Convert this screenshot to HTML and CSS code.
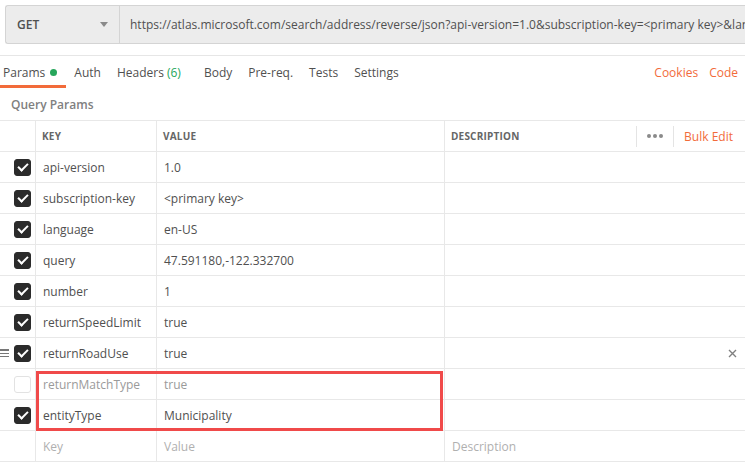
FILE: index.html
```html
<!DOCTYPE html>
<html>
<head>
<meta charset="utf-8">
<link rel="stylesheet" href="styles.css">
</head>
<body>
<div class="page">
  <div class="topbar">
    <div class="method"><span>GET</span><span class="caret"></span></div>
    <div class="url">https://atlas.microsoft.com/search/address/reverse/json?api-version=1.0&amp;subscription-key=&lt;primary key&gt;&amp;lan</div>
  </div>
  <div class="tabbar">
    <div class="tabs">
      <span class="tab active">Params<span class="dot"></span></span>
      <span class="tab">Auth</span>
      <span class="tab">Headers <span class="count">(6)</span></span>
      <span class="tab body-tab">Body</span>
      <span class="tab">Pre-req.</span>
      <span class="tab">Tests</span>
      <span class="tab">Settings</span>
    </div>
    <div class="links"><span>Cookies</span><span>Code</span></div>
  </div>
  <div class="section-title">Query Params</div>
  <div class="table">
    <div class="row head">
      <div class="c chk"></div>
      <div class="c">KEY</div>
      <div class="c">VALUE</div>
      <div class="c desc-head"><span>DESCRIPTION</span><span class="tools"><span class="sep"></span><span class="more"><i></i><i></i><i></i></span><span class="sep"></span><span class="bulk">Bulk Edit</span></span></div>
    </div>
    <div class="row"><div class="c chk"><span class="box on"></span></div><div class="c">api-version</div><div class="c">1.0</div><div class="c"></div></div>
    <div class="row"><div class="c chk"><span class="box on"></span></div><div class="c">subscription-key</div><div class="c">&lt;primary key&gt;</div><div class="c"></div></div>
    <div class="row"><div class="c chk"><span class="box on"></span></div><div class="c">language</div><div class="c">en-US</div><div class="c"></div></div>
    <div class="row"><div class="c chk"><span class="box on"></span></div><div class="c">query</div><div class="c">47.591180,-122.332700</div><div class="c"></div></div>
    <div class="row"><div class="c chk"><span class="box on"></span></div><div class="c">number</div><div class="c">1</div><div class="c"></div></div>
    <div class="row"><div class="c chk"><span class="box on"></span></div><div class="c">returnSpeedLimit</div><div class="c">true</div><div class="c"></div></div>
    <div class="row"><div class="c chk"><span class="handle"></span><span class="box on"></span></div><div class="c">returnRoadUse</div><div class="c">true</div><div class="c del-cell"><svg class="del" width="9" height="9" viewBox="0 0 9 9"><path d="M1 1L8 8M8 1L1 8" stroke="#808080" stroke-width="1.4" fill="none"/></svg></div></div>
    <div class="highlight-wrap">
      <div class="row off"><div class="c chk"><span class="box"></span></div><div class="c">returnMatchType</div><div class="c">true</div><div class="c"></div></div>
      <div class="row"><div class="c chk"><span class="box on"></span></div><div class="c">entityType</div><div class="c">Municipality</div><div class="c"></div></div>
      <div class="highlight"></div>
    </div>
    <div class="row ph"><div class="c chk"></div><div class="c">Key</div><div class="c">Value</div><div class="c">Description</div></div>
  </div>
</div>
</body>
</html>
```
FILE: styles.css
```css
html, body {
  margin: 0;
  padding: 0;
  background: #fff;
  overflow: hidden;
}
body {
  font-family: "Open Sans", "Liberation Sans", sans-serif;
  font-size: 12px;
  color: #505050;
}
.page {
  width: 745px;
  height: 467px;
  overflow: hidden;
}
.topbar {
  display: flex;
  margin: 5px 0 0 5px;
  height: 37px;
  border: 1px solid #d4d4d4;
  border-right: none;
  border-radius: 3px 0 0 3px;
  background: #ececec;
}
.method {
  width: 114px;
  flex: none;
  display: flex;
  align-items: center;
  justify-content: space-between;
  padding: 0 11px 0 11px;
  box-sizing: border-box;
  border-right: 1px solid #d4d4d4;
  font-weight: 600;
  color: #505050;
}
.caret {
  width: 0;
  height: 0;
  border-left: 4px solid transparent;
  border-right: 4px solid transparent;
  border-top: 5px solid #8a8a8a;
}
.url {
  flex: 1;
  padding-left: 10px;
  line-height: 37px;
  white-space: nowrap;
  overflow: hidden;
  color: #505050;
}
.tabbar {
  margin-top: 11px;
  border-top: 1px solid #e6e6e6;
  height: 32px;
  display: flex;
  align-items: stretch;
  justify-content: space-between;
}
.tabs {
  display: flex;
  margin-left: -5px;
}
.tab {
  position: relative;
  display: flex;
  align-items: center;
  padding: 0 8px;
  white-space: pre;
  color: #505050;
}
.tab.active {
  padding-right: 9px;
}
.tab.active::after {
  content: "";
  position: absolute;
  left: 0;
  right: 0;
  bottom: 0;
  height: 3px;
  background: #f26b3a;
}
.dot {
  display: inline-block;
  width: 7px;
  height: 7px;
  border-radius: 50%;
  background: #26a65b;
  margin-left: 5px;
}
.count {
  color: #26a65b;
}
.body-tab {
  margin-left: 7px;
}
.links {
  display: flex;
  align-items: center;
  gap: 11px;
  padding-right: 7px;
  color: #f26b3a;
}
.section-title {
  padding: 9px 0 0 11px;
  height: 32px;
  box-sizing: border-box;
  font-size: 12px;
  font-weight: 600;
  color: #808080;
  line-height: 16px;
}
.table {
  border-top: 1px solid #e8e8e8;
}
.row {
  display: grid;
  grid-template-columns: 35px 121px 288px 1fr;
  height: 31px;
  box-sizing: border-box;
  border-bottom: 1px solid #e8e8e8;
}
.c {
  display: flex;
  align-items: center;
  padding-left: 7px;
  border-left: 1px solid #e8e8e8;
  white-space: nowrap;
  overflow: hidden;
}
.c.chk {
  border-left: none;
  padding: 0 4px 0 0;
  justify-content: flex-end;
  position: relative;
}
.head .c {
  font-size: 10px;
  font-weight: 700;
  color: #666;
  padding-left: 6px;
  letter-spacing: 0.2px;
}
.desc-head {
  justify-content: space-between;
}
.tools {
  display: flex;
  align-items: center;
  height: 100%;
}
.sep {
  width: 1px;
  height: 21px;
  background: #e4e4e4;
}
.more {
  display: flex;
  gap: 2px;
  padding: 0 10px 0 10px;
}
.more i {
  display: block;
  width: 4px;
  height: 4px;
  border-radius: 50%;
  background: #8a8a8a;
}
.head .c .bulk {
  font-size: 12px;
  font-weight: 400;
  color: #f26b3a;
  letter-spacing: 0;
  padding: 0 12px 0 10px;
}
.box {
  width: 17px;
  height: 17px;
  box-sizing: border-box;
  border-radius: 3px;
  border: 1px solid #e2e2e2;
  background: #fff;
  position: relative;
}
.box.on {
  background: #2b2b2b;
  border-color: #2b2b2b;
}
.box.on::after {
  content: "";
  position: absolute;
  left: 5px;
  top: 1.5px;
  width: 4px;
  height: 8px;
  border-right: 2.5px solid #fff;
  border-bottom: 2.5px solid #fff;
  transform: rotate(45deg);
}
.handle {
  position: absolute;
  left: 0;
  top: 11px;
  width: 9px;
  height: 9px;
  background: repeating-linear-gradient(to bottom, #777 0, #777 1.5px, transparent 1.5px, transparent 3.5px);
}
.del-cell {
  justify-content: flex-end;
  padding-right: 8px;
}
.del {
  display: block;
}
.off .c {
  color: #9a9a9a;
}
.ph .c {
  color: #b0b0b0;
}
.highlight-wrap {
  position: relative;
}
.highlight {
  position: absolute;
  left: 36px;
  top: 2px;
  width: 407px;
  height: 60px;
  box-sizing: border-box;
  border: 3px solid #f04a4a;
  pointer-events: none;
}
```
